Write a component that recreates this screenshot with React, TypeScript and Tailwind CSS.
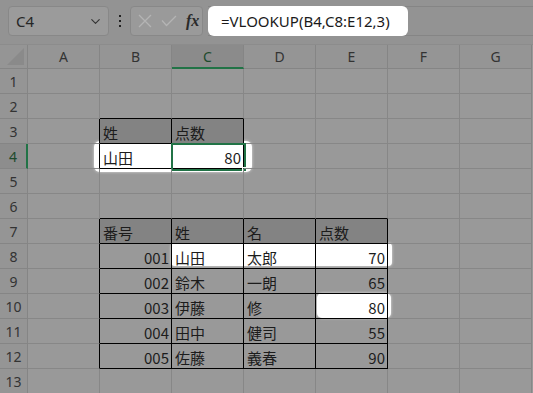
import { ChevronDown } from "lucide-react";

const COLS = ["A", "B", "C", "D", "E", "F", "G"];
const ROWS = Array.from({ length: 13 }, (_, i) => i + 1);

type Cell = { v: string; right?: boolean; head?: boolean };

const DATA: Record<string, Cell> = {
  B3: { v: "姓", head: true },
  C3: { v: "点数", head: true },
  B4: { v: "山田" },
  C4: { v: "80", right: true },
  B7: { v: "番号", head: true },
  C7: { v: "姓", head: true },
  D7: { v: "名", head: true },
  E7: { v: "点数", head: true },
};

const ROWS_T2 = [
  ["001", "山田", "太郎", "70"],
  ["002", "鈴木", "一朗", "65"],
  ["003", "伊藤", "修", "80"],
  ["004", "田中", "健司", "55"],
  ["005", "佐藤", "義春", "90"],
];
ROWS_T2.forEach((r, i) => {
  const row = 8 + i;
  DATA["B" + row] = { v: r[0], right: true };
  DATA["C" + row] = { v: r[1] };
  DATA["D" + row] = { v: r[2] };
  DATA["E" + row] = { v: r[3], right: true };
});

// col index: A=0 ... G=6
function inTable(r: number, c: number) {
  return (r >= 3 && r <= 4 && c >= 1 && c <= 2) || (r >= 7 && r <= 12 && c >= 1 && c <= 4);
}

function GridCell({ r, c }: { r: number; c: number }) {
  const key = COLS[c] + r;
  const cell = DATA[key];
  const rb = inTable(r, c) || inTable(r, c + 1) ? "border-r-black" : "border-r-[#878787]";
  const bb = inTable(r, c) || inTable(r + 1, c) ? "border-b-black" : "border-b-[#878787]";
  return (
    <div
      className={`relative z-[1] border-r border-b ${rb} ${bb} flex items-center overflow-visible whitespace-nowrap text-[15px] leading-none ${
        cell?.right ? "justify-end pr-[2px]" : "justify-start pl-[3px]"
      } ${cell?.head ? "bg-[#838383]" : ""}`}
      style={{ fontFamily: '"Noto Sans CJK JP", sans-serif' }}
    >
      {cell && <span className="text-[#1c1c1c] pt-[2px]">{cell.v}</span>}
      {key === "C4" && (
        <>
          <div className="absolute -left-[1px] -top-[1px] w-[75px] h-[28px] border-2 border-[#217346]" />
          <div className="absolute left-[70px] top-[23px] w-[5px] h-[5px] bg-[#217346] border border-white" />
        </>
      )}
    </div>
  );
}

export default function App() {
  return (
    <div
      className="w-[533px] h-[393px] overflow-hidden bg-[#939393] text-[#222]"
      style={{ fontFamily: '"Noto Sans", "Noto Sans CJK JP", sans-serif' }}
    >
      {/* formula bar */}
      <div className="h-[44px] flex items-start pt-[6px] pl-[8px]">
        <div className="w-[101px] h-[30px] rounded-[4px] border border-[#888] bg-[#9b9b9b] flex items-center justify-between pl-[7px] pr-[5px]">
          <span className="text-[15px] text-[#262626]">C4</span>
          <ChevronDown size={15} strokeWidth={1.8} className="text-[#333]" />
        </div>
        <div className="w-[21px] h-[30px] flex flex-col items-center justify-center gap-[3px]">
          <span className="w-[2px] h-[2px] bg-[#222]" />
          <span className="w-[2px] h-[2px] bg-[#222]" />
          <span className="w-[2px] h-[2px] bg-[#222]" />
        </div>
        <div className="w-[73px] h-[30px] rounded-[4px] border border-[#888] bg-[#9a9a9a] flex items-center pl-[7px] gap-[9px]">
          <svg width="14" height="14" viewBox="0 0 14 14" className="text-[#b4b4b4]">
            <path d="M1 1L13 13M13 1L1 13" stroke="currentColor" strokeWidth="1.3" fill="none" />
          </svg>
          <svg width="16" height="12" viewBox="0 0 16 12" className="text-[#b4b4b4]">
            <path d="M1 5.5L5.5 10.5L15 1" stroke="currentColor" strokeWidth="1.3" fill="none" />
          </svg>
          <span
            className="text-[16px] italic font-bold text-[#2a2a2a] leading-none"
            style={{ fontFamily: '"Liberation Serif", serif' }}
          >
            fx
          </span>
        </div>
        <div className="ml-[5px] flex-1 h-[30px] border-y border-y-[#858585] flex">
          <div className="w-[200px] h-[30px] -mt-[1px] rounded-[6px] bg-white flex items-center pl-[13px] text-[15px] text-[#1a1a1a]">
            =VLOOKUP(B4,C8:E12,3)
          </div>
        </div>
      </div>

      {/* sheet */}
      <div className="relative grid grid-cols-[28px_repeat(7,72px)] grid-rows-[24px_repeat(13,25px)] bg-[#999999] border-t border-[#8c8c8c]">
        {/* highlights */}
        <div className="absolute z-0 left-[94px] top-[96px] w-[158px] h-[31px] rounded-[6px] bg-white shadow-[0_0_3px_rgba(255,255,255,0.7)]" />
        <div className="absolute z-0 left-[171px] top-[198px] w-[221px] h-[23px] rounded-[4px] bg-white shadow-[0_0_3px_rgba(255,255,255,0.7)]" />
        <div className="absolute z-0 left-[317px] top-[248px] w-[74px] h-[25px] rounded-[5px] bg-white shadow-[0_0_3px_rgba(255,255,255,0.7)]" />

        {/* corner */}
        <div className="relative z-[1] border-r border-b border-[#858585] bg-[#959595] flex items-end justify-end p-[3px]">
          <div className="w-0 h-0 border-l-[17px] border-l-transparent border-b-[17px] border-b-[#8a8a8a]" />
        </div>
        {COLS.map((c) => (
          <div
            key={c}
            className={`relative z-[1] flex items-center justify-center text-[14px] border-r border-[#858585] ${
              c === "C"
                ? "bg-[#8b8b8b] text-[#1d4a2c] border-b-2 border-b-[#217346]"
                : "bg-[#959595] text-[#333] border-b border-b-[#858585]"
            }`}
          >
            {c}
          </div>
        ))}

        {ROWS.map((r) => (
          <>
            <div
              key={"h" + r}
              className={`relative z-[1] flex items-center justify-center text-[14px] border-b border-[#858585] ${
                r === 4
                  ? "bg-[#8d8d8d] text-[#1d4a2c] border-r-2 border-r-[#217346]"
                  : "bg-[#959595] text-[#333] border-r border-r-[#858585]"
              }`}
            >
              {r}
            </div>
            {COLS.map((_, ci) => (
              <GridCell key={r + "-" + ci} r={r} c={ci} />
            ))}
          </>
        ))}
      </div>
    </div>
  );
}
